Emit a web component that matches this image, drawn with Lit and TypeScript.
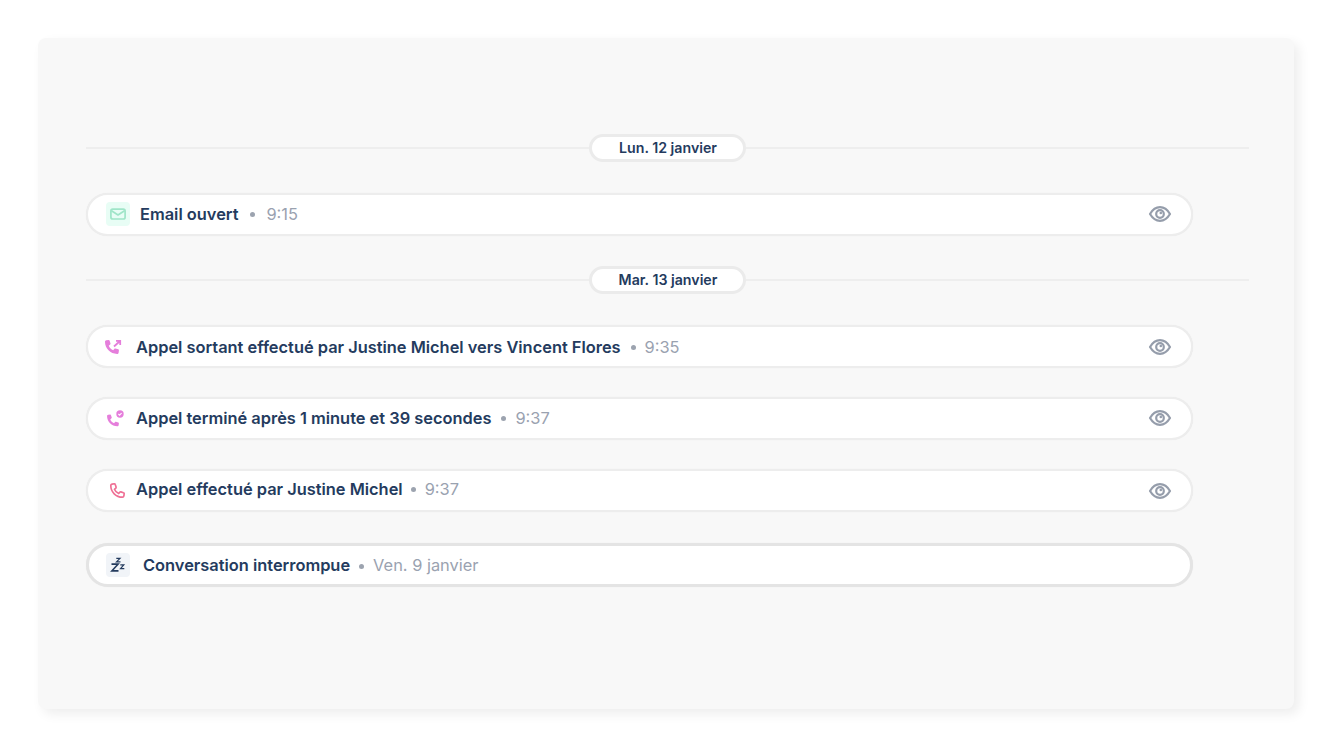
import { LitElement, html, css, svg } from 'lit';
import { customElement } from 'lit/decorators.js';

const eye = html`<svg class="eye" width="24" height="24" viewBox="0 0 24 24" fill="none">
    <path d="M2 12c2.400-4 5.800-6.800 10-6.800S19.600 8 22 12c-2.400 4-5.800 6.800-10 6.800S4.400 16 2 12Z" stroke="#959dab" stroke-width="2.200" stroke-linejoin="round"/>
    <circle cx="12" cy="12" r="3.800" stroke="#959dab" stroke-width="2.200"/>
    <circle cx="12.800" cy="11" r="1.300" fill="#959dab"/>
</svg>`;

// handset shared by the call icons
const handset = svg`<path d="M3.200 2.300 5.400 2c.5 0 .8.300.9.700l.8 2.500c.1.400 0 .8-.3 1L5.500 7.300c.8 1.900 2.200 3.300 4.100 4.100l1.100-1.300c.3-.3.700-.4 1-.3l2.500.8c.4.100.7.400.7.900l-.3 2.200c-.1.700-.7 1.200-1.400 1.200C7 14.900 2 9.900 2 3.700c0-.7.500-1.300 1.200-1.400Z"/>`;

@customElement('app-root')
export class AppRoot extends LitElement {
    static styles = css`
        :host {
            display: block;
            height: 747px;
            background: #fff;
            padding: 38px;
            box-sizing: border-box;
            font-family: Inter, 'Liberation Sans', sans-serif;
        }

        .card {
            height: 671px;
            background: #f8f8f8;
            border-radius: 8px;
            box-shadow: 5px 5px 12px rgba(0, 0, 0, 0.07);
            padding: 96px 45px 0 48px;
            box-sizing: border-box;
            display: flex;
            flex-direction: column;
        }

        .day {
            display: flex;
            align-items: center;
            height: 28px;
            flex: none;
        }
        .day::before, .day::after {
            content: '';
            flex: 1;
            height: 2px;
            background: #eeeeee;
        }
        .pill {
            box-sizing: border-box;
            width: 157px;
            height: 28px;
            line-height: 22px;
            padding-left: 1px;
            text-align: center;
            background: #fff;
            border: 3px solid #ebebeb;
            border-radius: 14px;
            font-size: 14.200px;
            font-weight: 600;
            color: #243b5e;
        }

        .row {
            box-sizing: border-box;
            width: 1107px;
            height: 43px;
            flex: none;
            display: flex;
            align-items: center;
            background: #fff;
            border: 2px solid #ededed;
            border-radius: 22px;
            box-shadow: 0 0 1px rgba(0, 0, 0, 0.08);
            font-size: 16.400px;
            padding-left: 18px;
            padding-right: 19px;
        }
        .row.up { padding-bottom: 2px; }
        .row.ended {
            height: 44px;
            border: 3px solid #e4e4e4;
            padding-left: 17px;
        }

        .ico {
            width: 24px;
            height: 24px;
            flex: none;
            display: flex;
            align-items: center;
            justify-content: center;
            border-radius: 4px;
        }
        .ico.mail { background: #e8fdf5; margin-right: 10px; }
        .ico.zzz { background: #f1f4f8; margin-right: 13px; }
        .ico.call { margin: 0 8px 0 -2px; justify-content: flex-start; }

        .title {
            font-weight: 600;
            color: #243b5e;
            white-space: nowrap;
        }
        .sep {
            width: 5px;
            height: 5px;
            border-radius: 50%;
            background: #9ca3af;
            margin: 2px 9px 0 9px;
            flex: none;
        }
        .sep.wide { margin-left: 12px; margin-right: 11px; }
        .sep.far { margin-left: 10px; }
        .sep.near { margin-left: 8px; margin-top: 0; margin-bottom: 2px; }
        .time {
            color: #9aa2b0;
            white-space: nowrap;
        }
        .lift { padding-bottom: 4px; }
        .eye { margin-left: auto; flex: none; }

        .g31 { margin-top: 31px; }
        .g30 { margin-top: 30px; }
        .g29 { margin-top: 29px; }
    `;

    render() {
        return html`
            <div class="card">
                <div class="day"><span class="pill">Lun. 12 janvier</span></div>

                <div class="row up g31">
                    <span class="ico mail">
                        <svg width="16" height="16" viewBox="0 0 16 16" fill="none" stroke="#9fe5c8" stroke-width="1.700">
                            <rect x=".9" y="3.200" width="14.200" height="9.800" rx="1.800"/>
                            <path d="M1.500 4.800 8 9l6.500-4.200" stroke-linejoin="round"/>
                        </svg>
                    </span>
                    <span class="title">Email ouvert</span>
                    <span class="sep wide"></span>
                    <span class="time">9:15</span>
                    ${eye}
                </div>

                <div class="day g30"><span class="pill">Mar. 13 janvier</span></div>

                <div class="row g31">
                    <span class="ico call">
                        <svg width="18" height="18" viewBox="0 0 18 18" fill="#e57edb">
                            <g transform="translate(-1.160 -.16) scale(1.080)">${handset}</g>
                            <path d="M10 8.500 16 3M12 2.800h4.200V7" fill="none" stroke="#e57edb" stroke-width="1.800"/>
                        </svg>
                    </span>
                    <span class="title">Appel sortant effectué par Justine Michel vers Vincent Flores</span>
                    <span class="sep far"></span>
                    <span class="time">9:35</span>
                    ${eye}
                </div>

                <div class="row up g29">
                    <span class="ico call">
                        <svg width="20" height="20" viewBox="0 0 20 20" fill="#e57edb">
                            <g transform="translate(1.200 4.660) scale(.92)">${handset}</g>
                            <circle cx="16" cy="6" r="3.700"/>
                            <path d="M14.400 6l1.200 1.200 2-2.200" fill="none" stroke="#fff" stroke-width="1.100"/>
                        </svg>
                    </span>
                    <span class="title">Appel terminé après 1 minute et 39 secondes</span>
                    <span class="sep far"></span>
                    <span class="time">9:37</span>
                    ${eye}
                </div>

                <div class="row g29">
                    <span class="ico call">
                        <svg width="22" height="18" viewBox="0 0 22 18" fill="none" stroke="#ef6f94" stroke-width="1.600" stroke-linejoin="round">
                            <g transform="translate(4.700 -.3) scale(1.040)">${handset}</g>
                        </svg>
                    </span>
                    <span class="title lift">Appel effectué par Justine Michel</span>
                    <span class="sep near"></span>
                    <span class="time lift">9:37</span>
                    ${eye}
                </div>

                <div class="row ended g31">
                    <span class="ico zzz">
                        <svg width="16" height="16" viewBox="0 0 16 16" fill="none" stroke="#243b5e" stroke-width="1.700">
                            <path d="M1.500 7.200H8L2 13.800H8.500"/>
                            <path d="M6.300 1.300H10L6.500 4.800H10.500" stroke-width="1.200"/>
                            <path d="M10.300 7.900H13.800L10.500 11.700H14.300" stroke-width="1.200"/>
                        </svg>
                    </span>
                    <span class="title">Conversation interrompue</span>
                    <span class="sep"></span>
                    <span class="time">Ven. 9 janvier</span>
                </div>
            </div>
        `;
    }
}
